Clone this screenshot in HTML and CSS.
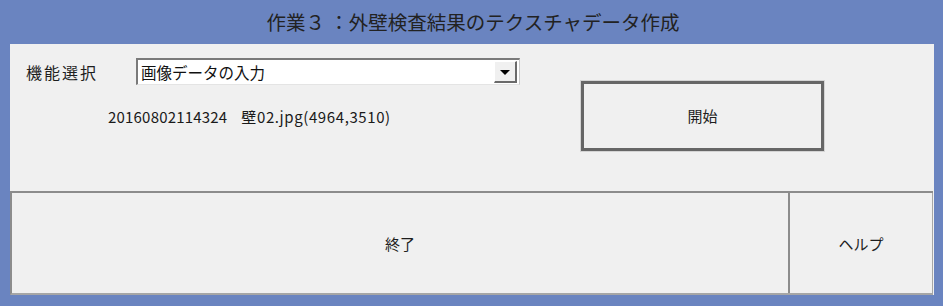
FILE: index.html
```html
<!DOCTYPE html>
<html lang="ja">
<head>
  <meta charset="UTF-8" />
  <title>作業３：外壁検査結果のテクスチャデータ作成</title>
  <link rel="stylesheet" href="styles.css">
</head>
<body>
  <div class="window">
    <header class="titlebar">作業３ ：外壁検査結果のテクスチャデータ作成</header>

    <div class="panel">
      <div class="top">
        <div class="left">
          <div class="select-row">
            <span class="label">機能選択</span>
            <div class="combo">
              <span class="combo-text">画像データの入力</span>
              <span class="combo-btn"><span class="arrow"></span></span>
            </div>
          </div>
          <div class="info">
            <span class="stamp">20160802114324</span>
            <span class="file">壁02.jpg(4964,3510)</span>
          </div>
        </div>
        <button class="start">開始</button>
      </div>

      <div class="bottom">
        <button class="end">終了</button>
        <button class="help">ヘルプ</button>
      </div>
    </div>
  </div>
</body>
</html>
```

FILE: styles.css
```css
:root {
  --frame: #6a84c0;
  --panel: #f0f0f0;
  --text: #1e1e1e;
  --font: "Noto Sans CJK JP", "Noto Sans", sans-serif;
}

* {
  box-sizing: border-box;
}

body {
  margin: 0;
  background: var(--frame);
  font-family: var(--font);
  color: var(--text);
}

.window {
  width: 943px;
  height: 306px;
  padding: 0 9px 11px 10px;
}

.titlebar {
  height: 44px;
  line-height: 44px;
  text-align: center;
  font-size: 19.5px;
  color: #222;
  padding-left: 2px;
}

.panel {
  background: var(--panel);
  height: 251px;
  display: flex;
  flex-direction: column;
}

.top {
  display: flex;
  height: 147px;
}

.left {
  width: 571px;
  padding: 14px 0 0 16px;
}

.select-row {
  display: flex;
  align-items: center;
  height: 27px;
}

.label {
  width: 110px;
  font-size: 16px;
  letter-spacing: 2px;
}

.combo {
  width: 384px;
  height: 27px;
  display: flex;
  background: #fff;
  border-top: 2px solid #7a7a7a;
  border-left: 2px solid #7a7a7a;
  border-right: 1px solid #c8c8c8;
  border-bottom: 1px solid #e4e4e4;
  padding: 1px 2px 1px 3px;
}

.combo-text {
  flex: 1;
  font-size: 15.5px;
  line-height: 22px;
  color: #111;
}

.combo-btn {
  width: 23px;
  height: 22px;
  background: #f0f0f0;
  border-top: 1px solid #fff;
  border-left: 1px solid #fff;
  border-right: 2px solid #6a6a6a;
  border-bottom: 2px solid #6a6a6a;
  display: flex;
  align-items: center;
  justify-content: center;
}

.arrow {
  width: 0;
  height: 0;
  border-left: 5px solid transparent;
  border-right: 5px solid transparent;
  border-top: 5px solid #000;
  margin-top: 1px;
}

.info {
  display: flex;
  gap: 14px;
  margin: 21px 0 0 82px;
  font-size: 15px;
  color: #1a1a1a;
}

.stamp {
  letter-spacing: 0.2px;
}

.file {
  letter-spacing: 0.6px;
}

button {
  font-family: var(--font);
  color: var(--text);
  background: var(--panel);
  cursor: pointer;
}

.start {
  width: 243px;
  height: 70px;
  margin-top: 37px;
  border: 3px solid #666;
  outline: 1px solid #d4d4d4;
  font-size: 15px;
  padding-bottom: 2px;
}

.bottom {
  display: flex;
  height: 104px;
  border-top: 2px solid #8c8c8c;
  border-left: 2px solid #8c8c8c;
  border-bottom: 2px solid #a6a6a6;
  margin-right: 1px;
}

.bottom button {
  border: none;
  font-size: 15px;
}

.end {
  flex: 1;
  border-right: 2px solid #8c8c8c !important;
}

.help {
  width: 143px;
  border-right: 1px solid #a6a6a6 !important;
}
```
